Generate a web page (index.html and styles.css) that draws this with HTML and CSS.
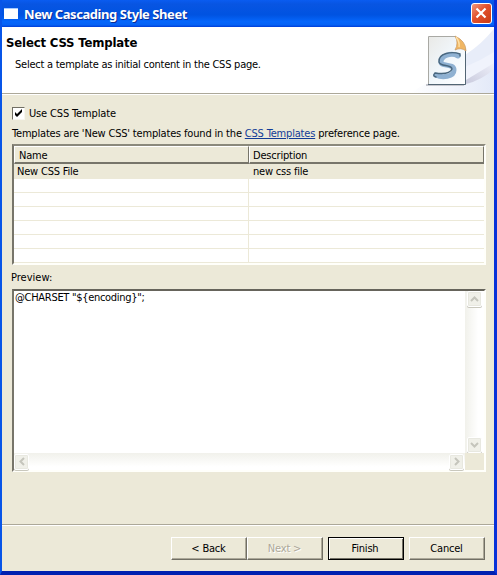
FILE: index.html
```html
<!DOCTYPE html>
<html lang="en">
<head>
<meta charset="utf-8">
<title>New Cascading Style Sheet</title>
<link rel="stylesheet" href="styles.css">
</head>
<body>
<div class="window">
  <div class="titlebar">
    <span class="app-icon"></span>
    <span class="title">New Cascading Style Sheet</span>
    <span class="close"><svg width="20" height="20" viewBox="0 0 20 20"><path d="M5.5 5.5l9 9M14.5 5.5l-9 9" stroke="#fff" stroke-width="2.2"/></svg></span>
  </div>
  <div class="header">
    <div class="header-text">
      <h1><span class="heading">Select CSS Template</span></h1>
      <p><span class="summary">Select a template as initial content in the CSS page.</span></p>
    </div>
    <svg class="banner" width="84" height="66" viewBox="0 0 84 66">
      <defs>
        <linearGradient id="sky" x1="0" y1="0" x2="1" y2="0"><stop offset="0" stop-color="#fff"/><stop offset="1" stop-color="#e3e9f8"/></linearGradient>
        <linearGradient id="page" x1="0" y1="0" x2="1" y2="1"><stop offset="0" stop-color="#e9e9e6"/><stop offset=".5" stop-color="#f1f7fc"/><stop offset="1" stop-color="#fff"/></linearGradient>
        <linearGradient id="shade" x1="0" y1="1" x2="1" y2="0"><stop offset="0" stop-color="#c9cadd"/><stop offset="1" stop-color="#eef0fa"/></linearGradient>
      </defs>
      <path d="M0 66L10 60Q58 35 84 2V66Z" fill="url(#sky)"/>
      <path d="M55 28Q72 17 84 2V26Q70 34 55 40Z" fill="#e8edf9"/>
      <path d="M55 40Q70 34 84 25V36Q70 47 55 53Z" fill="#f0f3fc"/>
      <path d="M56 53L84 36V42Q72 53 56 57Z" fill="url(#shade)"/>
      <path d="M16 58H54" stroke="#c6c7ce" stroke-width="2"/>
      <path d="M18.500 9.500H45L55.500 22V57.500H18.500Z" fill="url(#page)" stroke="#a9a9a4"/>
      <path d="M18 57.500H55.500V24" fill="none" stroke="#526574"/>
      <path d="M45 9Q49 16 45 23Q51 20 56 24Q56 14 45 9Z" fill="#f0b663" stroke="#c99a64" stroke-width=".7"/>
      <path d="M46 10Q50 15 49 20" fill="none" stroke="#ffe0a4" stroke-width="1.500"/>
      <path d="M48 29C41 25 31 29 31 35C31 40 44 36 44 43C44 50 32 51 26 48" fill="none" stroke="#8fb1d2" stroke-width="5" stroke-linecap="round"/>
      <path d="M50 29V27C42 24 28 26 29 35C30 40 42 37 42 42C40 47 32 47 25 46Q22 49 26 50" fill="none" stroke="#49677f" stroke-width="1.400" stroke-linecap="round"/>
    </svg>
  </div>
  <div class="content">
    <label class="check-row"><span class="checkbox"><svg width="9" height="9" viewBox="0 0 9 9"><path d="M1 3v3l2 2 5-5V0L3 5z"/></svg></span><span class="check-label">Use CSS Template</span></label>
    <div class="hint"><span class="hint-a">Templates are 'New CSS' templates found in the </span><a class="link">CSS Templates</a><span class="hint-b"> preference page.</span></div>
    <div class="table">
      <div class="row head"><div class="cell"><span>Name</span></div><div class="cell"><span>Description</span></div></div>
      <div class="row selected"><div class="cell"><span>New CSS File</span></div><div class="cell"><span>new css file</span></div></div>
      <div class="row"><div class="cell"></div><div class="cell"></div></div>
      <div class="row"><div class="cell"></div><div class="cell"></div></div>
      <div class="row"><div class="cell"></div><div class="cell"></div></div>
      <div class="row"><div class="cell"></div><div class="cell"></div></div>
      <div class="row"><div class="cell"></div><div class="cell"></div></div>
      <div class="row"><div class="cell"></div><div class="cell"></div></div>
    </div>
    <div class="preview-label"><span>Preview:</span></div>
    <div class="preview">
      <div class="code"><span class="t-code">@CHARSET "${encoding}";</span></div>
      <div class="vbar">
        <span class="arrow"><svg width="9" height="6"><path d="M1 5l3.500-3.500L8 5"/></svg></span>
        <span class="arrow"><svg width="9" height="6"><path d="M1 1l3.500 3.500L8 1"/></svg></span>
      </div>
      <div class="hbar">
        <span class="arrow"><svg width="6" height="9"><path d="M5 1L1.500 4.500L5 8"/></svg></span>
        <span class="arrow"><svg width="6" height="9"><path d="M1 1l3.500 3.500L1 8"/></svg></span>
      </div>
      <div class="corner"></div>
    </div>
  </div>
  <div class="footer">
    <div class="button"><span>&lt; Back</span></div>
    <div class="button disabled"><span>Next &gt;</span></div>
    <div class="button default"><span>Finish</span></div>
    <div class="button"><span>Cancel</span></div>
  </div>
</div>
</body>
</html>
```
FILE: styles.css
```css
* { box-sizing: border-box; }
body { margin: 0; font: 11px/14px "DejaVu Sans Condensed", "DejaVu Sans", sans-serif; font-stretch: condensed; color: #000; letter-spacing: -0.2px; }
span, a { white-space: pre; }
.window { width: 497px; height: 575px; display: flex; flex-direction: column; background: #ece9d8; border: solid #0831d9; border-width: 0 3px 4px 2px; border-left-color: #0855e8; border-bottom-color: #0020b0; overflow: hidden; }
.titlebar { height: 27px; flex: none; margin: 0 -3px 0 -2px; padding: 0 5px 0 4px; display: flex; align-items: center; background: linear-gradient(#0a5cf0 0, #0855e2 15%, #0053e1 55%, #0566fb 80%, #0562f5 92%, #003dd7 100%); }
.app-icon { width: 14px; height: 11px; margin-right: 6px; background: #fff; border-top: 1px solid #a6caff; }
.title { flex: 1; color: #fff; font: bold 13px/20px "Noto Sans", sans-serif; letter-spacing: -0.44px; text-shadow: 1px 1px #0b2b91; }
.close { width: 21px; height: 21px; border: 1px solid #fff; border-radius: 3px; background: linear-gradient(135deg, #ee997f, #e2502c 45%, #c93b15); }
.close svg { display: block; margin: -1px; }
.header { height: 66px; flex: none; background: #fff; display: flex; justify-content: space-between; }
.header-text { display: flow-root; }
h1 { margin: 8px 0 0 4px; font-size: 13px; line-height: 16px; letter-spacing: -0.16px; }
p { margin: 7px 0 0 13px; letter-spacing: -0.24px; }
.banner { display: block; }
.content { height: 431px; flex: none; border-top: 1px solid #aca899; box-shadow: inset 0 1px #fff; padding: 11px 8px 0 10px; }
.check-row { display: flex; height: 16px; align-items: center; }
.check-label { padding-top: 2px; letter-spacing: -0.15px; }
.checkbox { width: 13px; height: 13px; margin-right: 4px; background: #fff; border: 1px solid #f7f6ef; border-top-color: #716f64; border-left-color: #716f64; }
.checkbox svg { display: block; margin: 1px; }
.hint { height: 14px; margin-top: 6px; letter-spacing: -0.18px; }
.link { color: #123c97; text-decoration: underline; }
.table { height: 121px; margin-top: 3px; border: 2px solid #fffffa; border-top-color: #8b897c; border-left-color: #77756a; background: #fff; }
.row { display: flex; height: 14px; border-bottom: 1px solid #ece9d8; }
.cell { flex: 1; padding-left: 4px; }
.row .cell:first-child { flex: 0 0 235px; padding-left: 3px; border-right: 1px solid #ece9d8; }
.head { height: 18px; background: #ece9d8; border: 0; }
.head .cell { padding-left: 3px; border: 1px solid #fff; border-right: 1px solid #77756a !important; border-bottom: 2px solid #77756a; line-height: 17px; }
.head .cell:first-child { padding-left: 4px; }
.selected { height: 15px; background: #ece9d8; line-height: 16px; }
.selected .cell:first-child { border-right-color: transparent; }
.preview-label { height: 14px; margin: 6px 0 0 -1px; letter-spacing: 0; }
.preview { height: 183px; margin-top: 4px; display: grid; grid-template-columns: 1fr 19px; grid-template-rows: 1fr 17px; background: #fff; border: 2px solid #fffffa; border-top-color: #66645b; border-left-color: #77756a; }
.code { padding: 0 0 0 1px; letter-spacing: -0.3px; }
.vbar { display: flex; flex-direction: column; justify-content: space-between; align-items: flex-start; padding-left: 2px; background: linear-gradient(90deg, #f1f1eb, #fff 70%); }
.hbar { display: flex; justify-content: space-between; align-items: center; padding-right: 1px; background: linear-gradient(#f1f1eb, #fff 80%); }
.corner { background: #ece9d8; }
.arrow { width: 15px; height: 16px; display: flex; align-items: center; justify-content: center; background: #f0f0e9; border: 1px solid #fff; border-radius: 2px; box-shadow: inset 0 0 0 1px #e8e8e0, 0 1px #c9c8bd; }
.arrow path { fill: none; stroke: #c5c5bc; stroke-width: 2; }
.footer { flex: 1; display: flex; justify-content: flex-end; border-top: 1px solid #aca899; box-shadow: inset 0 1px #fff; padding: 12px 9px 0 0; }
.button { width: 76px; height: 23px; padding-right: 1px; display: flex; align-items: center; justify-content: center; border: 1px solid #fff; border-right-color: #716f64; border-bottom-color: #716f64; box-shadow: inset -1px -1px #aca899; }
.disabled { color: #aca899; text-shadow: 1px 1px #fff; }
.default { margin: 0 5px; padding-right: 2px; border: 1px solid #000; box-shadow: inset 1px 1px #fff, inset -1px -1px #716f64; }
```
